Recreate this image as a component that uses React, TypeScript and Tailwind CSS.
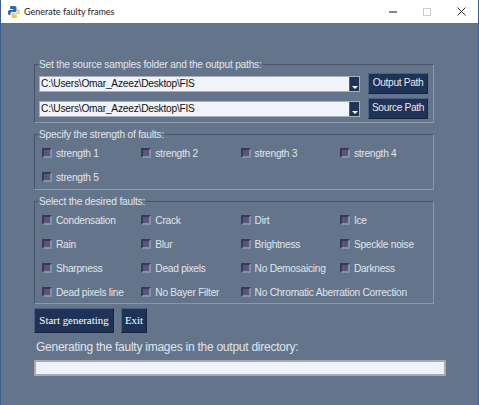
const strengths = ["strength 1", "strength 2", "strength 3", "strength 4", "strength 5"];
const faults = [
  "Condensation",
  "Crack",
  "Dirt",
  "Ice",
  "Rain",
  "Blur",
  "Brightness",
  "Speckle noise",
  "Sharpness",
  "Dead pixels",
  "No Demosaicing",
  "Darkness",
  "Dead pixels line",
  "No Bayer Filter",
  "No Chromatic Aberration Correction",
];

const Check = ({ label }: { label: string }) => (
  <label className="flex items-center gap-[4px] h-[24px] whitespace-nowrap">
    <span className="w-[10px] h-[10px] bg-[#565680] border-2 border-t-[#363a4c] border-l-[#363a4c] border-r-[#8391a5] border-b-[#8391a5] shrink-0" />
    <span className="pt-[1px]">{label}</span>
  </label>
);

const Group = ({ title, children, className }: { title: string; children: React.ReactNode; className?: string }) => (
  <fieldset className={`w-[400px] border border-t-[#46546a] border-l-[#46546a] border-r-[#8a98ac] border-b-[#8a98ac] ${className ?? ""}`}>
    <legend className="ml-[3px] px-[1px] text-[10.200px] leading-[13px] tracking-[-0.21px] text-[#e0e5ec]">{title}</legend>
    {children}
  </fieldset>
);

const PathRow = ({ button }: { button: string }) => (
  <div className="flex items-center h-[25px]">
    <div className="flex w-[321px] h-[16px] border border-[#a9b0ba] bg-[#f0f3f9] text-[10.200px] leading-[14px] tracking-[-0.23px] text-[#111]">
      <span className="flex-1 pl-[1px]">C:\Users\Omar_Azeez\Desktop\FIS</span>
      <span className="flex items-end justify-center w-[10px] pb-[2px] bg-[#1f3358] border-l border-[#52617a]">
        <span className="w-0 h-0 border-x-[3px] border-x-transparent border-t-[3px] border-t-white" />
      </span>
    </div>
    <button className="ml-[8px] w-[60px] h-[21px] whitespace-nowrap bg-[#1f3358] border border-t-[#4a5f83] border-l-[#4a5f83] border-r-[#16233b] border-b-[#16233b] text-[10.200px] tracking-[-0.35px] text-[#e4e9f0] leading-none">
      {button}
    </button>
  </div>
);

const Button = ({ children, className }: { children: React.ReactNode; className?: string }) => (
  <button className={`h-[25px] bg-[#1f3358] border border-t-[#4a5f83] border-l-[#4a5f83] border-r-[#16233b] border-b-[#16233b] text-[10.900px] text-white leading-none [font-family:'Liberation_Serif',serif] ${className ?? ""}`}>
    {children}
  </button>
);

export default function App() {
  return (
    <div className="w-[479px] h-[405px] flex flex-col bg-[#64748a] border-x border-[#3f5f8f] overflow-hidden [font-family:'Liberation_Sans',sans-serif]">
      <div className="flex items-center h-[23px] bg-white pl-[6px] shrink-0">
        <svg width="13" height="14" viewBox="0 0 13 14">
          <path d="M4 1h4a1.500 1.500 0 0 1 1.500 1.500V6a1 1 0 0 1-1 1H5a1.500 1.500 0 0 0-1.500 1.500V10H2.500A1.500 1.500 0 0 1 1 8.500v-2A1.500 1.500 0 0 1 2.500 5H6V4H3V2a1 1 0 0 1 1-1z" fill="#2f6da6" />
          <path d="M10.500 4H11a1.500 1.500 0 0 1 1.500 1.500v2A1.500 1.500 0 0 1 11 9H7.500v1H10v2a1 1 0 0 1-1 1H6a1.500 1.500 0 0 1-1.500-1.500V9.500A1.500 1.500 0 0 1 6 8h3a1.500 1.500 0 0 0 1.500-1.500z" fill="#f4c93f" />
        </svg>
        <span className="ml-[4px] text-[9px] text-[#1c1c1c] [font-family:'Lato',sans-serif]">Generate faulty frames</span>
        <div className="ml-auto flex items-center">
          <span className="w-[8px] h-[2px] bg-[#888] mr-[26px]" />
          <span className="w-[8px] h-[8px] border border-[#ccc] mr-[26px]" />
          <svg width="9" height="9" viewBox="0 0 9 9" className="mr-[12px]">
            <path d="M0.500 0.500l8 8M8.500 0.500l-8 8" stroke="#333" strokeWidth="1" />
          </svg>
        </div>
      </div>

      <div className="pl-[33px] pt-[35px] text-[10.200px] tracking-[-0.27px] text-[#e0e5ec]">
        <Group title="Set the source samples folder and the output paths:" className="h-[65px]">
          <div className="pl-[4px]">
            <PathRow button="Output Path" />
            <PathRow button="Source Path" />
          </div>
        </Group>
        <Group title="Specify the strength of faults:" className="mt-[5px] h-[62px]">
          <div className="grid grid-cols-[99.300px_99.300px_99.300px_90px] pl-[7px]">
            {strengths.map((s) => (
              <Check key={s} label={s} />
            ))}
          </div>
        </Group>
        <Group title="Select the desired faults:" className="mt-[5px] h-[109px]">
          <div className="grid grid-cols-[99.300px_99.300px_99.300px_90px] pl-[7px]">
            {faults.map((f) => (
              <Check key={f} label={f} />
            ))}
          </div>
        </Group>
        <div className="flex gap-[7px] mt-[4px] tracking-normal">
          <Button className="w-[80px]">Start generating</Button>
          <Button className="w-[26px]">Exit</Button>
        </div>
        <div className="mt-[6px] ml-[2px] text-[12px] tracking-[-0.25px] leading-[16px] whitespace-nowrap">Generating the faulty images in the output directory:</div>
        <div className="mt-[5px] w-[412px] h-[16px] bg-[#f0f3f9] border-2 border-[#a6abb2]" />
      </div>
    </div>
  );
}
